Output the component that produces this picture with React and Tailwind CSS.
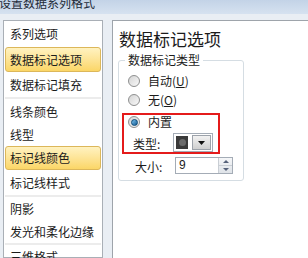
import React from "react"

const font = { fontFamily: '"Noto Sans CJK SC", "Noto Sans", sans-serif' }

const navItems = [
  { label: "系列选项", h: "h-[26px]" },
  { label: "数据标记选项", h: "h-[25px]", active: true },
  { label: "数据标记填充", h: "h-[25px]" },
  { sep: true },
  { label: "线条颜色", h: "h-[25px]" },
  { label: "线型", h: "h-[22px]" },
  { label: "标记线颜色", h: "h-[24px]", active: true },
  { label: "标记线样式", h: "h-[25px]" },
  { sep: true },
  { label: "阴影", h: "h-[24px]" },
  { label: "发光和柔化边缘", h: "h-[22px]" },
  { sep: true },
  { label: "三维格式", h: "h-[24px]" },
]

function Radio({ checked }) {
  return (
    <div className="w-[12px] h-[12px] rounded-full border border-[#8e8f8f] bg-gradient-to-br from-[#d4d4d4] to-[#f9f9f9] flex items-center justify-center shrink-0">
      {checked && <div className="w-[7px] h-[7px] rounded-full bg-gradient-to-br from-[#7cc4ef] to-[#0d5b93] border border-[#0b4a78]" />}
    </div>
  )
}

export default function App() {
  return (
    <div style={font} className="w-[308px] h-[258px] overflow-hidden bg-[#e9eef4] text-[#1b1b1b] flex flex-col">

      {/* title bar */}
      <div className="h-[14px] shrink-0 overflow-hidden bg-gradient-to-b from-[#c3d3e7] to-[#d6e2f0]">
        <p className="text-[12px] leading-[14px] -mt-[4px] -ml-[1px] text-[#1e2a38] whitespace-nowrap">设置数据系列格式</p>
      </div>

      <div className="flex flex-1 pt-[6px] min-h-0">

        {/* left list */}
        <div className="ml-[3px] w-[100px] border border-[#a9afb6] bg-white px-[1px] shrink-0">
          {navItems.map((item, i) =>
            item.sep ? (
              <div key={i} className="h-[2px] bg-[#ececec]" />
            ) : (
              <div key={i} className={`${item.h} flex items-center`}>
                <div className={`w-full h-full flex items-center pl-[4px] text-[12px] whitespace-nowrap ${item.active ? "rounded-[3px] border border-[#dcb75a] bg-gradient-to-b from-[#fff2c0] to-[#fbd666]" : "border border-transparent"}`}>
                  {item.label}
                </div>
              </div>
            )
          )}
        </div>

        {/* right panel */}
        <div className="ml-[9px] flex-1 bg-white border-l border-t border-[#9ea4ab] pl-[5px]">
          <p className="pt-[8px] pl-[1px] text-[17px] leading-[20px] whitespace-nowrap">数据标记选项</p>

          <div className="relative mt-[11px] w-[126px] border border-[#d5dde3] rounded-[3px] pt-[11px] pb-[6px] pl-[4px]">
            <span className="absolute -top-[9px] left-[6px] bg-white px-[3px] text-[12px] leading-[16px]">数据标记类型</span>

            <div className="h-[18px] flex items-center pl-[5px] gap-[8px] text-[12px]">
              <Radio />
              <span>自动(<span className="underline">U</span>)</span>
            </div>
            <div className="mt-[1px] h-[18px] flex items-center pl-[5px] gap-[8px] text-[12px]">
              <Radio />
              <span>无(<span className="underline">O</span>)</span>
            </div>

            <div className="mt-[4px] -ml-[1px] w-[98px] border-2 border-[#e41b1b]">
              <div className="h-[14px] flex items-center pl-[4px] gap-[8px] text-[12px]">
                <Radio checked />
                <span>内置</span>
              </div>
              <div className="mt-[4px] h-[19px] flex items-center pl-[9px] text-[12px]">
                <span className="w-[40px] pt-[2px]">类型:</span>
                <div className="h-[19px] w-[40px] border border-[#a4acb6] bg-white flex items-center">
                  <div className="ml-[2px] w-[12px] h-[13px] bg-[#3a3a3a] flex items-center justify-center">
                    <div className="w-[7px] h-[7px] rounded-full bg-[#6b6b6b]" />
                  </div>
                  <div className="ml-auto mr-[1px] w-[19px] h-[15px] border border-[#9da3ab] bg-gradient-to-b from-[#f2f2f2] to-[#cfcfcf] flex items-center justify-center">
                    <svg width="7" height="4" viewBox="0 0 7 4"><path d="M0 0h7L3.5 4z" fill="#111" /></svg>
                  </div>
                </div>
              </div>
            </div>

            <div className="mt-[3px] h-[17px] flex items-center pl-[12px] text-[12px]">
              <span className="w-[40px] pt-[2px]">大小:</span>
              <div className="h-[17px] w-[58px] border border-[#a4acb6] bg-white flex items-center">
                <span className="pl-[3px] text-[12px] leading-[15px] flex-1" style={{ fontFamily: '"Liberation Sans", sans-serif' }}>9</span>
                <div className="w-[14px] h-full flex flex-col border-l border-[#c9ced4] bg-gradient-to-b from-[#f5f6f8] to-[#dfe3e8]">
                  <div className="flex-1 flex items-center justify-center border-b border-[#c9ced4]">
                    <svg width="6" height="3" viewBox="0 0 6 3"><path d="M3 0L6 3H0z" fill="#56627a" /></svg>
                  </div>
                  <div className="flex-1 flex items-center justify-center">
                    <svg width="6" height="3" viewBox="0 0 6 3"><path d="M0 0h6L3 3z" fill="#56627a" /></svg>
                  </div>
                </div>
              </div>
            </div>
          </div>
        </div>

      </div>
    </div>
  )
}
